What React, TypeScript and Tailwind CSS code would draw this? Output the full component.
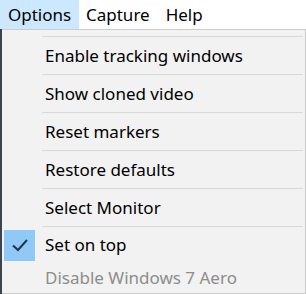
const items = [
  'Enable tracking windows',
  'Show cloned video',
  'Reset markers',
  'Restore defaults',
  'Select Monitor',
];

function Separator() {
  return <div className="ml-[40px] mr-[2px] h-px bg-[#d9d9d9]" />;
}

export default function App() {
  return (
    <div
      className="w-[306px] h-[294px] bg-white overflow-hidden text-[17px] text-black"
      style={{ fontFamily: '"Segoe UI", "Noto Sans", "Liberation Sans", sans-serif' }}
    >
      {/* Menu bar */}
      <div className="flex h-[29px] items-center">
        <div className="h-full flex items-center px-[8px] w-[79px] bg-[#cce8ff]">Options</div>
        <div className="h-full flex items-center px-[7px]">Capture</div>
        <div className="h-full flex items-center px-[9px]">Help</div>
      </div>

      {/* Dropdown */}
      <div className="flex h-[265px]">
        <div className="w-[2px] bg-[#3a4550]" />
        <div className="flex-1 flex flex-col bg-[#f2f2f2] border-t border-r border-b border-[#cccccc] pt-[6px]">
          <Separator />
          {items.map((label) => (
            <div key={label}>
              <div className="h-[37px] flex items-center pl-[43px] pt-px">{label}</div>
              <Separator />
            </div>
          ))}
          <div className="h-[35px] flex items-center pl-[2px] pt-px">
            <div className="w-[31px] h-[31px] bg-[#90c8f6] flex items-center justify-center">
              <svg width="18" height="14" viewBox="0 0 18 14">
                <path d="M2 7.5 L7 12 L16 2" fill="none" stroke="#1c3553" strokeWidth="2" />
              </svg>
            </div>
            <span className="ml-[10px]">Set on top</span>
          </div>
          <div className="h-[31px] flex items-center pl-[43px] text-[#8d8d8d]">Disable Windows 7 Aero</div>
        </div>
      </div>
    </div>
  );
}
